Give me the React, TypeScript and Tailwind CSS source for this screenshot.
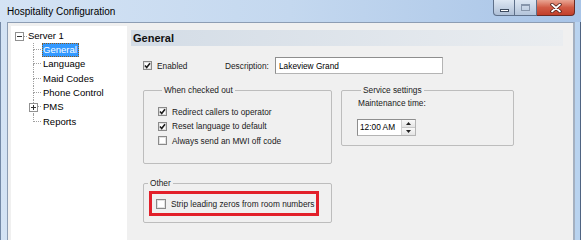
import React from "react";

const TREE = ["General", "Language", "Maid Codes", "Phone Control", "PMS", "Reports"];

function CheckBox({ checked, size = 9 }: { checked?: boolean; size?: number }) {
  return (
    <svg width={size} height={size} viewBox={`0 0 ${size} ${size}`} className="shrink-0">
      <rect x="0.5" y="0.5" width={size - 1} height={size - 1} fill="#fff" stroke="#8a8a8a" />
      <rect x="1.5" y="1.5" width={size - 3} height={size - 3} fill="none" stroke="#e2e2e2" />
      {checked && <path d="M2 4.4 L3.7 6.4 L7 2.3" fill="none" stroke="#1c1c1c" strokeWidth="1.6" />}
    </svg>
  );
}

function Expander({ open }: { open?: boolean }) {
  return (
    <svg width="9" height="9" viewBox="0 0 9 9" className="shrink-0 bg-white">
      <rect x="0.5" y="0.5" width="8" height="8" fill="#fff" stroke="#919191" />
      <path d="M2 4.5 H7" stroke="#333" />
      {!open && <path d="M4.5 2 V7" stroke="#333" />}
    </svg>
  );
}

function GroupBox({ title, className, children }: { title: string; className?: string; children: React.ReactNode }) {
  return (
    <fieldset className={`rounded-[2px] border border-[#bdbdbd] ${className ?? ""}`}>
      <legend className="ml-[4px] px-[2px] text-[8.3px] leading-[10px] text-[#1a1a1a]">{title}</legend>
      {children}
    </fieldset>
  );
}

function CheckRow({ label, checked }: { label: string; checked?: boolean }) {
  return (
    <div className="flex h-[14.5px] items-center gap-[5px]">
      <CheckBox checked={checked} />
      <span>{label}</span>
    </div>
  );
}

export default function App() {
  return (
    <div className="flex h-[240px] w-[581px] flex-col overflow-hidden bg-gradient-to-r from-[#d4e3f4] via-[#c4d8ef] to-[#a8c4e7] font-['Liberation_Sans',Arial,sans-serif] text-[#1a1a1a]">
      {/* Title bar */}
      <div className="flex h-[22px] shrink-0 items-start">
        <div className="pl-[7px] pt-[6px] text-[10px] leading-[12px] text-black">Hospitality Configuration</div>
        <div className="flex-1" />
        <div className="mr-[6px] flex h-[16px]">
          <div className="flex w-[22px] items-end justify-center rounded-bl-[4px] border border-t-0 border-[#5e708a] bg-gradient-to-b from-[#dde7f3] to-[#aebfd6] pb-[3px]">
            <div className="h-[3px] w-[9px] border border-[#3c4a5e] bg-white" />
          </div>
          <div className="flex w-[22px] items-center justify-center border-b border-r border-[#5e708a] bg-gradient-to-b from-[#dde7f3] to-[#b3c4da]">
            <div className="h-[7px] w-[9px] border border-[#8796ab] border-t-2" />
          </div>
          <div className="flex w-[38px] items-center justify-center rounded-br-[4px] border-b border-r border-[#6b2a22] bg-gradient-to-b from-[#e9a593] via-[#d15b45] to-[#c23f2a]">
            <svg width="12" height="10" viewBox="0 0 12 10">
              <path d="M2 1.5 L10 8.5 M10 1.5 L2 8.5" stroke="#4a1a14" strokeWidth="3.4" strokeLinecap="round" />
              <path d="M2 1.5 L10 8.5 M10 1.5 L2 8.5" stroke="#fff" strokeWidth="1.8" strokeLinecap="round" />
            </svg>
          </div>
        </div>
      </div>

      {/* Body */}
      <div className="flex min-h-0 flex-1">
        <div className="w-[7px] shrink-0 border-l border-[#7489a6]" />
        <div className="flex min-w-0 flex-1 border-l border-r-2 border-t border-[#8d9db3] border-r-[#a4b0c0] bg-[#f0f0f0] text-[8.3px] leading-[10px]">
          {/* Tree */}
          <div className="ml-[3px] mt-[3px] w-[116px] shrink-0 bg-white pt-[3px] text-[9.5px] leading-[12px] text-black">
            <div className="flex h-[14px] items-center pl-[4px]">
              <Expander open />
              <div className="w-[3px] border-b border-dotted border-[#a0a0a0]" />
              <span className="ml-[1px]">Server 1</span>
            </div>
            {TREE.map((name, i) => {
              const last = i === TREE.length - 1;
              const selected = name === "General";
              return (
                <div key={name} className="flex h-[14.3px] items-center pl-[22px]">
                  <div className="relative flex h-full w-[8px] shrink-0 flex-col">
                    <div className="h-1/2 border-b border-l border-dotted border-[#a0a0a0]" />
                    <div className={`h-1/2 border-dotted border-[#a0a0a0] ${last ? "" : "border-l"}`} />
                    {name === "PMS" && (
                      <div className="absolute left-[-4px] top-[2.5px]">
                        <Expander />
                      </div>
                    )}
                  </div>
                  <span
                    className={`ml-[1px] border pr-[1px] ${
                      selected ? "border-dotted border-[#8a5a1e] bg-[#3399ff] text-white" : "border-transparent"
                    }`}
                  >
                    {name}
                  </span>
                </div>
              );
            })}
          </div>

          {/* Content */}
          <div className="min-w-0 flex-1 pl-[4px] pr-[10px] pt-[7px]">
            <div className="flex h-[16px] items-center bg-gradient-to-r from-[#d3dce6] to-[#eaedf0] pl-[2px] text-[11px] font-bold leading-[14px] text-[#111]">
              General
            </div>
            <div className="pl-[12px]">
              <div className="mt-[11px] flex h-[17px] items-center">
                <div className="flex w-[82px] items-center gap-[5px]">
                  <CheckBox checked />
                  <span>Enabled</span>
                </div>
                <span className="w-[50px]">Description:</span>
                <div className="flex h-[17px] w-[168px] items-center border border-[#b4b4b4] border-l-[#8e8e8e] border-t-[#8e8e8e] bg-white pl-[3px] text-black">
                  Lakeview Grand
                </div>
              </div>

              <div className="mt-[11px] flex items-start gap-[9px]">
                <GroupBox title="When checked out" className="w-[189px] pb-[15px] pl-[14px] pt-[9.5px]">
                  <CheckRow label="Redirect callers to operator" checked />
                  <CheckRow label="Reset language to default" checked />
                  <CheckRow label="Always send an MWI off code" />
                </GroupBox>
                <GroupBox title="Service settings" className="w-[173px] pb-[9px] pl-[15px] pt-[3.3px]">
                  <div className="ml-[1px]">Maintenance time:</div>
                  <div className="mt-[10.7px] flex h-[17px] w-[59px] items-center border border-[#b4b4b4] border-l-[#8e8e8e] border-t-[#8e8e8e] bg-white text-black">
                    <span className="flex-1 pl-[2px]">12:00 AM</span>
                    <div className="flex h-full w-[14px] flex-col border-l border-[#d0d0d0]">
                      <div className="flex flex-1 items-center justify-center border-b border-[#c8c8c8] bg-gradient-to-b from-[#fafafa] to-[#e4e4e4]">
                        <svg width="5" height="3" viewBox="0 0 5 3"><path d="M0 3 L2.5 0 L5 3 Z" fill="#222" /></svg>
                      </div>
                      <div className="flex flex-1 items-center justify-center bg-gradient-to-b from-[#fafafa] to-[#e4e4e4]">
                        <svg width="5" height="3" viewBox="0 0 5 3"><path d="M0 0 L2.5 3 L5 0 Z" fill="#222" /></svg>
                      </div>
                    </div>
                  </div>
                </GroupBox>
              </div>

              <GroupBox title="Other" className="mt-[14px] w-[189px] pb-[6px]">
                <div className="ml-[5px] mt-[3px] flex h-[25px] w-[170px] items-center gap-[5px] border-[3px] border-[#e2202a] pl-[4px]">
                  <CheckBox size={10} />
                  <span>Strip leading zeros from room numbers</span>
                </div>
              </GroupBox>
            </div>
          </div>
        </div>
        <div className="flex w-[6px] shrink-0">
          <div className="flex-1 bg-[#b9d3ef]" />
          <div className="w-[1px] bg-[#4f6482]" />
        </div>
      </div>
    </div>
  );
}
